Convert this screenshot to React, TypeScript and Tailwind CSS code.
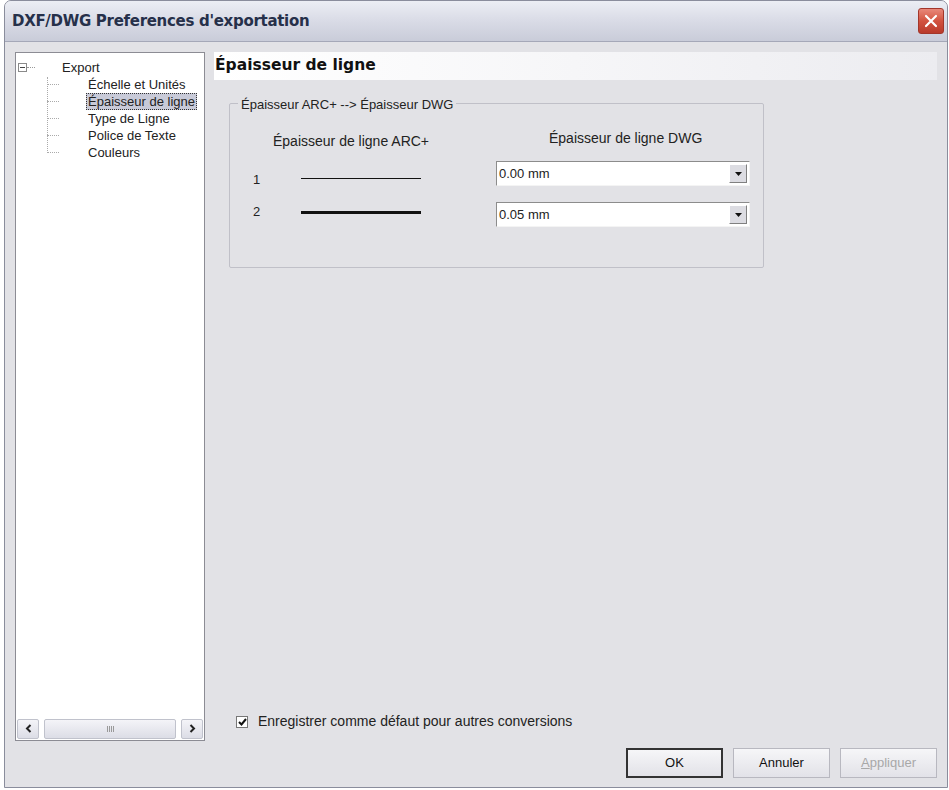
import React from "react";

const treeItems = ["Échelle et Unités", "Épaisseur de ligne", "Type de Ligne", "Police de Texte", "Couleurs"];

function Combo({ value }: { value: string }) {
  return (
    <div className="flex h-[25px] w-[254px] items-center border border-t-[#8c8c8c] border-l-[#8c8c8c] border-b-[#f4f4f4] border-r-[#f4f4f4] bg-white pl-[2px] pr-[2px]">
      <span className="flex-1 text-[13px] text-[#222]">{value}</span>
      <div className="flex h-[19px] w-[18px] items-center justify-center border border-t-white border-l-white border-b-[#808080] border-r-[#808080] bg-[#dcdce2]">
        <svg width="7" height="4" viewBox="0 0 7 4"><path d="M0 0h7L3.5 4z" fill="#111" /></svg>
      </div>
    </div>
  );
}

function Button({ label, primary, disabled }: { label: string; primary?: boolean; disabled?: boolean }) {
  return (
    <div
      className={`flex h-[30px] w-[97px] items-center justify-center border bg-gradient-to-b from-[#f6f6f8] to-[#e2e2e8] text-[13px] ${
        primary ? "border-[#333] border-2" : "border-[#b8b8c0]"
      } ${disabled ? "text-[#a8a8a8]" : "text-[#111]"}`}
    >
      {disabled ? (
        <span>
          <span className="underline">A</span>ppliquer
        </span>
      ) : (
        label
      )}
    </div>
  );
}

export default function App() {
  return (
    <div className="h-[790px] w-[949px] bg-white font-['Liberation_Sans',Arial,sans-serif]">
      <div className="flex h-[788px] w-[944px] flex-col overflow-hidden rounded-t-[7px] border border-[#8a8d9c] bg-[#e2e2e6] ml-[4px]">
        {/* Title bar */}
        <div className="flex h-[41px] items-center justify-between bg-gradient-to-b from-[#eceef4] via-[#d9dbe6] to-[#c9ccd9] border-b border-[#a5a8b8] pl-[7px] pr-[3px]">
          <span className="font-['DejaVu_Sans',sans-serif] text-[15px] font-bold tracking-[-0.3px] text-[#26304a]">
            DXF/DWG Preferences d'exportation
          </span>
          <div className="flex h-[26px] w-[26px] items-center justify-center rounded-[3px] border border-[#a3362a] bg-gradient-to-b from-[#e8887a] via-[#d2523f] to-[#b93a2b]">
            <svg width="14" height="14" viewBox="0 0 14 14">
              <path d="M2 2l10 10M12 2L2 12" stroke="white" strokeWidth="2.2" strokeLinecap="round" />
            </svg>
          </div>
        </div>

        {/* Body */}
        <div className="flex flex-1 gap-[9px] px-[10px] pt-[10px]">
          {/* Tree panel */}
          <div className="flex h-[689px] w-[190px] flex-col border border-[#8c8c94] bg-white">
            <div className="relative flex-1 pt-[6px]">
              <div className="flex h-[17px] items-center">
                <div className="ml-[2px] flex h-[9px] w-[9px] items-center justify-center border border-[#8a8a8a]">
                  <div className="h-px w-[5px] bg-[#444]" />
                </div>
                <div className="w-[8px] border-t border-dotted border-[#999]" />
                <span className="ml-[27px] text-[13px] text-[#222]">Export</span>
              </div>
              <div className="absolute left-[31px] top-[24px] h-[76px] border-l border-dotted border-[#aaa]" />
              {treeItems.map((t, i) => (
                <div key={t} className="flex h-[17px] items-center">
                  <div className="ml-[31px] w-[12px] border-t border-dotted border-[#aaa]" />
                  <span
                    className={`ml-[27px] px-[1px] text-[13px] leading-[15px] text-[#222] ${
                      i === 1 ? "border border-dotted border-[#333] bg-[#c8cad8]" : "border border-transparent"
                    }`}
                  >
                    {t}
                  </span>
                </div>
              ))}
            </div>
            {/* scrollbar */}
            <div className="flex h-[22px] items-center gap-[5px] px-px pb-px">
              <div className="flex h-[20px] w-[22px] items-center justify-center rounded-[2px] border border-[#c0c2cc] bg-gradient-to-b from-[#f4f4f8] to-[#dcdde6]">
                <svg width="7" height="9" viewBox="0 0 7 9"><path d="M5.5 1L2 4.5 5.5 8" stroke="#222" strokeWidth="2" fill="none" /></svg>
              </div>
              <div className="flex h-[20px] flex-1 items-center justify-center rounded-[2px] border border-[#c0c2cc] bg-gradient-to-b from-[#f4f4f8] to-[#dcdde6]">
                <div className="flex gap-[1px]">
                  <div className="h-[6px] w-px bg-[#999]" />
                  <div className="h-[6px] w-px bg-[#999]" />
                  <div className="h-[6px] w-px bg-[#999]" />
                  <div className="h-[6px] w-px bg-[#999]" />
                </div>
              </div>
              <div className="flex h-[20px] w-[22px] items-center justify-center rounded-[2px] border border-[#c0c2cc] bg-gradient-to-b from-[#f4f4f8] to-[#dcdde6]">
                <svg width="7" height="9" viewBox="0 0 7 9"><path d="M1.5 1L5 4.5 1.5 8" stroke="#222" strokeWidth="2" fill="none" /></svg>
              </div>
            </div>
          </div>

          {/* Right area */}
          <div className="flex flex-1 flex-col">
            <div className="flex h-[28px] items-center bg-gradient-to-r from-white via-[#f6f6f8] to-[#ececf0] pl-[1px]">
              <span className="font-['DejaVu_Sans',sans-serif] text-[15.5px] font-bold text-[#111]">Épaisseur de ligne</span>
            </div>

            {/* Group box */}
            <div className="relative ml-[15px] mt-[23px] h-[165px] w-[535px] border border-[#c0c0c8] rounded-[2px]">
              <span className="absolute -top-[9px] left-[8px] bg-[#e2e2e6] px-[3px] text-[13px] text-[#222]">
                Épaisseur ARC+ --&gt; Épaisseur DWG
              </span>
              <div className="flex pt-[24px]">
                <div className="w-[266px]">
                  <div className="pl-[43px] pt-[3px] text-[14px] text-[#222]">Épaisseur de ligne ARC+</div>
                  <div className="mt-[16px] flex h-[20px] items-center">
                    <span className="w-[71px] pl-[23px] pt-[4px] text-[13px] text-[#222]">1</span>
                    <div className="h-px w-[120px] bg-[#111]" />
                  </div>
                  <div className="mt-[14px] flex h-[20px] items-center">
                    <span className="w-[71px] pl-[23px] text-[13px] text-[#222]">2</span>
                    <div className="h-[3px] w-[120px] bg-[#111]" />
                  </div>
                </div>
                <div className="flex flex-col">
                  <div className="pl-[53px] text-[14px] text-[#222]">Épaisseur de ligne DWG</div>
                  <div className="mt-[12px]">
                    <Combo value="0.00 mm" />
                  </div>
                  <div className="mt-[16px]">
                    <Combo value="0.05 mm" />
                  </div>
                </div>
              </div>
            </div>

            <div className="flex-1" />

            <div className="flex items-center gap-[10px] pl-[22px]">
              <div className="flex h-[12px] w-[12px] items-center justify-center border border-[#777] bg-white">
                <svg width="9" height="8" viewBox="0 0 9 8"><path d="M1 4l2.5 2.5L8 1" stroke="#111" strokeWidth="2" fill="none" /></svg>
              </div>
              <span className="text-[14px] text-[#222]">Enregistrer comme défaut pour autres conversions</span>
            </div>

            <div className="mb-[9px] mt-[16px] flex justify-end gap-[10px]">
              <Button label="OK" primary />
              <Button label="Annuler" />
              <Button label="Appliquer" disabled />
            </div>
          </div>
        </div>
      </div>
    </div>
  );
}
